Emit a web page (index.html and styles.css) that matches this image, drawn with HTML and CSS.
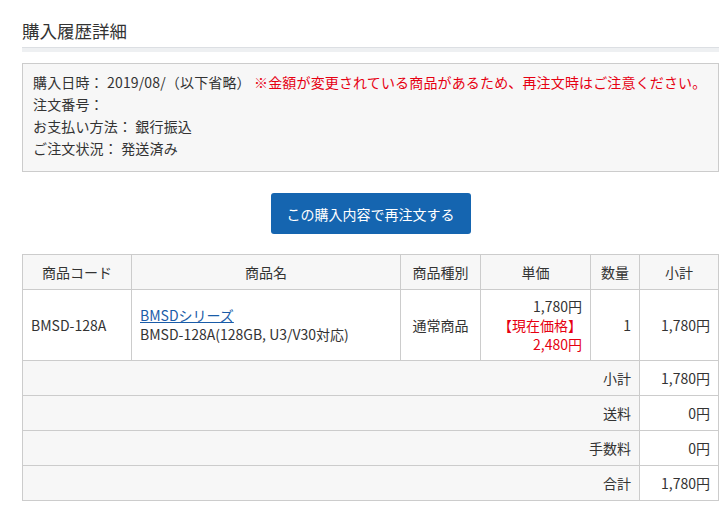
FILE: index.html
```html
<!DOCTYPE html>
<html lang="ja">
<head>
    <meta charset="UTF-8">
    <meta name="viewport" content="width=device-width, initial-scale=1.0">
    <title>購入履歴詳細</title>
    <link rel="stylesheet" href="styles.css">
</head>
<body>

    <main class="history">
        <h1 class="page-title">購入履歴詳細</h1>

        <div class="order-info">
            <p>購入日時： 2019/08/（以下省略） <span class="notice">※金額が変更されている商品があるため、再注文時はご注意ください。</span></p>
            <p>注文番号：</p>
            <p>お支払い方法： 銀行振込</p>
            <p>ご注文状況： 発送済み</p>
        </div>

        <div class="reorder">
            <button type="button" class="btn-reorder">この購入内容で再注文する</button>
        </div>

        <table class="items">
            <colgroup>
                <col style="width:109px">
                <col style="width:269px">
                <col style="width:80px">
                <col style="width:110px">
                <col style="width:49px">
                <col>
            </colgroup>
            <thead>
                <tr>
                    <th>商品コード</th>
                    <th>商品名</th>
                    <th>商品種別</th>
                    <th>単価</th>
                    <th>数量</th>
                    <th>小計</th>
                </tr>
            </thead>
            <tbody>
                <tr class="item-row">
                    <td>BMSD-128A</td>
                    <td><a href="#">BMSDシリーズ</a><br>BMSD-128A(128GB, U3/V30対応)</td>
                    <td class="center">通常商品</td>
                    <td class="num">1,780円<br><span class="price-now">【現在価格】<br>2,480円</span></td>
                    <td class="num">1</td>
                    <td class="num">1,780円</td>
                </tr>
                <tr class="sum-row">
                    <th colspan="5">小計</th>
                    <td class="num">1,780円</td>
                </tr>
                <tr class="sum-row">
                    <th colspan="5">送料</th>
                    <td class="num">0円</td>
                </tr>
                <tr class="sum-row">
                    <th colspan="5">手数料</th>
                    <td class="num">0円</td>
                </tr>
                <tr class="sum-row">
                    <th colspan="5">合計</th>
                    <td class="num">1,780円</td>
                </tr>
            </tbody>
        </table>
    </main>

</body>
</html>
```

FILE: styles.css
```css
* {
    margin: 0;
    padding: 0;
    box-sizing: border-box;
}
body {
    font-family: 'Noto Sans CJK JP', 'Noto Sans', sans-serif;
    font-size: 14px;
    background-color: #fff;
    color: #333;
}
.history {
    width: 697px;
    margin-left: 22px;
    padding-top: 19px;
}
.page-title {
    font-size: 17.5px;
    font-weight: normal;
    line-height: 24px;
    padding-bottom: 5px;
    border-bottom: 4px solid #eef0f2;
    box-shadow: inset 0 -1px 0 #dcdfe3;
}
.order-info {
    margin-top: 11px;
    background-color: #f7f7f7;
    border: 1px solid #ccc;
    padding: 7px 10px 10px;
    line-height: 22px;
    height: 109px;
    letter-spacing: 0.15px;
}
.notice {
    color: #e60012;
}
.reorder {
    text-align: center;
    margin-top: 21px;
}
.btn-reorder {
    width: 200px;
    height: 41px;
    background-color: #1565b0;
    color: #fff;
    border: none;
    border-radius: 3px;
    font-family: inherit;
    font-size: 14px;
    cursor: pointer;
}
.btn-reorder:hover {
    background-color: #1f74c4;
}
.items {
    width: 697px;
    margin-top: 20px;
    border-collapse: collapse;
    table-layout: fixed;
}
.items th,
.items td {
    border: 1px solid #ccc;
    padding: 0 8px;
    font-weight: normal;
    line-height: 19px;
}
.items thead th {
    background-color: #f7f7f7;
    height: 35px;
    text-align: center;
}
.item-row td {
    height: 71px;
    padding-top: 6px;
    padding-bottom: 6px;
}
.items a {
    color: #1a5ca8;
}
.items .center {
    text-align: center;
}
.items .num {
    text-align: right;
}
.price-now {
    color: #e60012;
}
.sum-row th {
    background-color: #f7f7f7;
    text-align: right;
    height: 35px;
}
```
